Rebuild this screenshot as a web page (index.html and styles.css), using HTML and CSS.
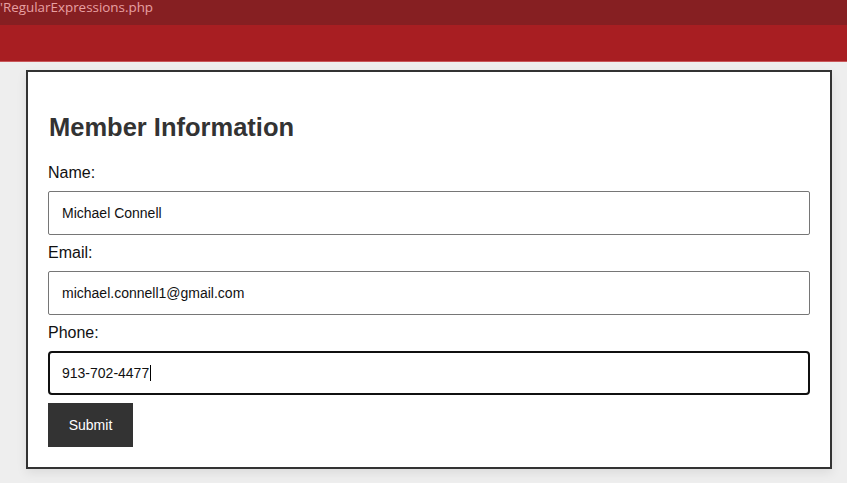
FILE: index.html
```html
<!DOCTYPE html>
<html lang="en">
<head>
<meta charset="utf-8">
<title>Member Information</title>
<link rel="stylesheet" href="styles.css">
</head>
<body>
<div class="topbar"><span class="path">'RegularExpressions.php</span></div>
<div class="banner"></div>
<main class="card">
  <h2 class="title">Member Information</h2>
  <form class="form">
    <label class="label">Name:</label>
    <div class="field"><span class="value">Michael Connell</span></div>
    <label class="label">Email:</label>
    <div class="field"><span class="value">michael.connell1@gmail.com</span></div>
    <label class="label">Phone:</label>
    <div class="field focused"><span class="value">913-702-4477</span><span class="caret"></span></div>
    <button type="button" class="submit">Submit</button>
  </form>
</main>
</body>
</html>
```
FILE: styles.css
```css
html, body {
  margin: 0;
  padding: 0;
}
body {
  background: #eeeeee;
  font-family: "Liberation Sans", Arial, sans-serif;
  width: 847px;
  height: 483px;
  overflow: hidden;
}
.topbar {
  height: 25px;
  background: #861f22;
  overflow: hidden;
}
.path {
  display: block;
  font-family: "Open Sans", "Noto Sans", sans-serif;
  font-size: 13.4px;
  line-height: 15px;
  color: #e8a0a2;
  white-space: nowrap;
}
.banner {
  height: 36px;
  background: #a81e22;
  border-bottom: 1px solid #c9575a;
}
.card {
  box-sizing: border-box;
  width: 806px;
  margin: 8px 0 0 26px;
  background: #ffffff;
  border: 2px solid #333333;
  padding: 20px;
  box-shadow: 0 4px 10px rgba(0, 0, 0, 0.08);
}
.title {
  margin: 21px 0 0 1px;
  font-size: 25.5px;
  font-weight: bold;
  color: #333333;
  line-height: 29px;
}
.form {
  display: flex;
  flex-direction: column;
  align-items: stretch;
  margin-top: 22px;
}
.label {
  display: block;
  font-size: 16px;
  line-height: 18px;
  color: #111111;
  margin-bottom: 9px;
}
.field {
  box-sizing: border-box;
  height: 44px;
  border: 1px solid #767676;
  border-radius: 2px;
  padding: 0 13px;
  display: flex;
  align-items: center;
  font-size: 14px;
  color: #111111;
  margin-bottom: 9px;
}
.field.focused {
  border: 2px solid #101010;
  border-radius: 4px;
  padding: 0 12px;
  margin-bottom: 8px;
}
.caret {
  display: inline-block;
  width: 1px;
  height: 16px;
  background: #000000;
  margin-left: 1px;
}
.submit {
  align-self: flex-start;
  box-sizing: border-box;
  height: 44px;
  width: 85px;
  border: none;
  background: #333333;
  color: #ffffff;
  font-family: "Liberation Sans", Arial, sans-serif;
  font-size: 14px;
  padding: 0;
  border-radius: 0;
}
```
